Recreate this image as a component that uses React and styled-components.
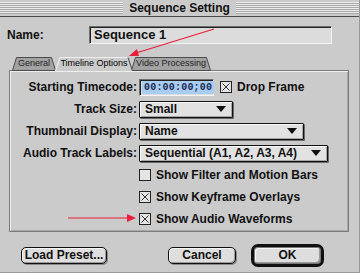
import React from 'react';
import styled, { createGlobalStyle } from 'styled-components';

const Global = createGlobalStyle`
  html, body { margin: 0; padding: 0; background: #cbcbcb; }
  * { box-sizing: border-box; }
`;

const Window = styled.div`
  position: relative;
  width: 360px;
  height: 273px;
  background: #cbcbcb;
  display: flex;
  flex-direction: column;
  font-family: "Liberation Sans", Arial, sans-serif;
  color: #111;
  border-right: 1px solid #9a9a9a;
  border-bottom: 1px solid #9a9a9a;
  overflow: hidden;
`;

const TitleBar = styled.div`
  height: 17px;
  display: flex;
  align-items: center;
  justify-content: center;
  border-bottom: 1px solid #4a4a4a;
  background:
    repeating-linear-gradient(to bottom, #ececec 0 1px, #a9a9a9 1px 2px) 0 2px / 100% 12px no-repeat,
    #cbcbcb;
`;

const Title = styled.div`
  background: #cbcbcb;
  padding: 0 6px;
  font-weight: bold;
  font-size: 12px;
  line-height: 16px;
`;

const Body = styled.div`
  flex: 1;
  display: flex;
  flex-direction: column;
  padding: 0 7px;
`;

const NameRow = styled.div`
  display: flex;
  align-items: center;
  margin-top: 9px;
  height: 18px;
`;

const Label = styled.div`
  font-weight: bold;
  font-size: 12px;
  white-space: nowrap;
  width: ${p => p.$w || 'auto'};
  text-align: ${p => p.$align || 'left'};
`;

const TextField = styled.div`
  width: 243px;
  height: 18px;
  background: #dcdcdc;
  border-top: 1px solid #6e6e6e;
  border-left: 1px solid #6e6e6e;
  border-bottom: 1px solid #f4f4f4;
  border-right: 1px solid #f4f4f4;
  box-shadow: inset 1px 1px 0 #222;
  font-weight: bold;
  font-size: 13px;
  padding: 0 4px;
  line-height: 15px;
`;

const TabStrip = styled.div`
  display: flex;
  margin-top: 13px;
  padding-left: 5px;
  height: 13px;
`;

const TabBox = styled.div`
  position: relative;
  width: ${p => p.$w}px;
  height: 13px;
  margin-left: ${p => p.$ml || 0}px;
  font-size: 9px;
  line-height: 13px;
  text-align: center;
  color: ${p => (p.$active ? '#000' : '#222')};
  z-index: ${p => (p.$active ? 2 : 1)};

  svg { position: absolute; left: 0; top: 0; }
  span { position: relative; }
`;

const Panel = styled.div`
  margin-left: 2px;
  width: 340px;
  height: 162px;
  border: 1px solid #7c7c7c;
  box-shadow: inset 1px 1px 0 #efefef, inset -1px -1px 0 #a8a8a8;
  display: grid;
  grid-template-columns: 127px 1fr;
  grid-auto-rows: 22px;
  column-gap: 2px;
  padding-top: 5px;
  align-items: center;
`;

const Field = styled.div`
  display: flex;
  align-items: center;
  gap: 6px;
`;

const TimeField = styled.div`
  width: 75px;
  height: 17px;
  background: #dcdcdc;
  border-top: 1px solid #6e6e6e;
  border-left: 1px solid #6e6e6e;
  border-bottom: 1px solid #f4f4f4;
  border-right: 1px solid #f4f4f4;
  box-shadow: inset 1px 1px 0 #222;
  padding: 1px 2px;
  display: flex;
`;

const Selected = styled.span`
  background: #a9cdf0;
  color: #1b2a55;
  font-family: "Liberation Mono", monospace;
  font-weight: bold;
  font-size: 10px;
  line-height: 13px;
  padding: 0 2px;
  letter-spacing: 0.2px;
`;

const Popup = styled.div`
  width: ${p => p.$w}px;
  height: 17px;
  background: #e2e2e2;
  border: 1px solid #111;
  box-shadow: 1px 1px 0 #6a6a6a, inset 1px 1px 0 #fafafa, inset -1px -1px 0 #a6a6a6;
  border-radius: 1px;
  display: flex;
  align-items: center;
  justify-content: space-between;
  padding: 0 6px 0 5px;
  font-weight: bold;
  font-size: 12px;
`;

const Check = styled.div`
  display: flex;
  align-items: center;
  gap: 5px;
  font-weight: bold;
  font-size: 12px;
  white-space: nowrap;
`;

const ButtonRow = styled.div`
  display: flex;
  align-items: center;
  margin-top: 11px;
  height: 24px;
`;

const Button = styled.div`
  width: ${p => p.$w}px;
  height: ${p => (p.$def ? 23 : 17)}px;
  margin-left: ${p => p.$ml}px;
  border: ${p => (p.$def ? '3px solid #111' : '1px solid #111')};
  border-radius: ${p => (p.$def ? 7 : 5)}px;
  background: #dedede;
  box-shadow: ${p => (p.$def
    ? 'inset 0 0 0 1px #777, inset 2px 2px 0 #f6f6f6, inset -2px -2px 0 #9a9a9a'
    : 'inset 1px 1px 0 #f6f6f6, inset -1px -1px 0 #9a9a9a, 1px 1px 0 #8a8a8a')};
  font-weight: bold;
  font-size: 12px;
  display: flex;
  align-items: center;
  justify-content: center;
`;

const Annotations = styled.svg`
  position: absolute;
  left: 0;
  top: 0;
  pointer-events: none;
`;

const CheckIcon = () => (
  <svg width="12" height="12" viewBox="0 0 12 12">
    <rect x="0.5" y="0.5" width="11" height="11" fill="#e4e4e4" stroke="#222" />
    <path d="M2.5 2.5 L9.5 9.5 M9.5 2.5 L2.5 9.5" stroke="#333" strokeWidth="1" />
  </svg>
);

const EmptyCheck = () => (
  <svg width="12" height="12" viewBox="0 0 12 12">
    <rect x="0.5" y="0.5" width="11" height="11" fill="#e4e4e4" stroke="#222" />
  </svg>
);

const Arrow = () => (
  <svg width="10" height="6" viewBox="0 0 10 6">
    <path d="M0 0 H10 L5 6 Z" fill="#111" />
  </svg>
);

const Tab = ({ w, ml, active, children }) => (
  <TabBox $w={w} $ml={ml} $active={active}>
    <svg width={w} height="14" viewBox={`0 0 ${w} 14`}>
      {active ? (
        <>
          <path d={`M0 14 L5 0.5 H${w - 5} L${w} 14`} fill="#cbcbcb" />
          <path d={`M0.5 14 L5 0.5 H${w - 5}`} fill="none" stroke="#f0f0f0" />
          <path d={`M${w - 5} 0.5 L${w - 0.5} 14`} fill="none" stroke="#444" />
        </>
      ) : (
        <path d={`M0.5 13.5 L4.5 0.5 H${w - 4.5} L${w - 0.5} 13.5 Z`} fill="#a2a2a2" stroke="#4c4c4c" />
      )}
    </svg>
    <span>{children}</span>
  </TabBox>
);

export default function App() {
  return (
    <Window>
      <Global />
      <TitleBar>
        <Title>Sequence Setting</Title>
      </TitleBar>
      <Body>
        <NameRow>
          <Label $w="82px">Name:</Label>
          <TextField>Sequence 1</TextField>
        </NameRow>
        <TabStrip>
          <Tab w={44}>General</Tab>
          <Tab w={78} ml={-1} active>Timeline Options</Tab>
          <Tab w={80} ml={-2}>Video Processing</Tab>
        </TabStrip>
        <Panel>
          <Label $align="right">Starting Timecode:</Label>
          <Field>
            <TimeField><Selected>00:00:00;00</Selected></TimeField>
            <Check><CheckIcon />Drop Frame</Check>
          </Field>

          <Label $align="right">Track Size:</Label>
          <Field><Popup $w={94}>Small<Arrow /></Popup></Field>

          <Label $align="right">Thumbnail Display:</Label>
          <Field><Popup $w={165}>Name<Arrow /></Popup></Field>

          <Label $align="right">Audio Track Labels:</Label>
          <Field><Popup $w={189}>Sequential (A1, A2, A3, A4)<Arrow /></Popup></Field>

          <div />
          <Check><EmptyCheck />Show Filter and Motion Bars</Check>

          <div />
          <Check><CheckIcon />Show Keyframe Overlays</Check>

          <div />
          <Check><CheckIcon />Show Audio Waveforms</Check>
        </Panel>
        <ButtonRow>
          <Button $w={86} $ml={14}>Load Preset...</Button>
          <Button $w={68} $ml={61}>Cancel</Button>
          <Button $w={73} $ml={15} $def>OK</Button>
        </ButtonRow>
      </Body>
      <Annotations width="360" height="273" viewBox="0 0 360 273">
        <g stroke="#e8203c" strokeWidth="1.2" fill="#e8203c">
          <line x1="214" y1="29" x2="136" y2="53" />
          <path d="M129 56 L137 49 L139 56 Z" stroke="none" />
          <line x1="68" y1="218" x2="128" y2="218" />
          <path d="M136 218 L127 214 L127 222 Z" stroke="none" />
        </g>
      </Annotations>
    </Window>
  );
}
